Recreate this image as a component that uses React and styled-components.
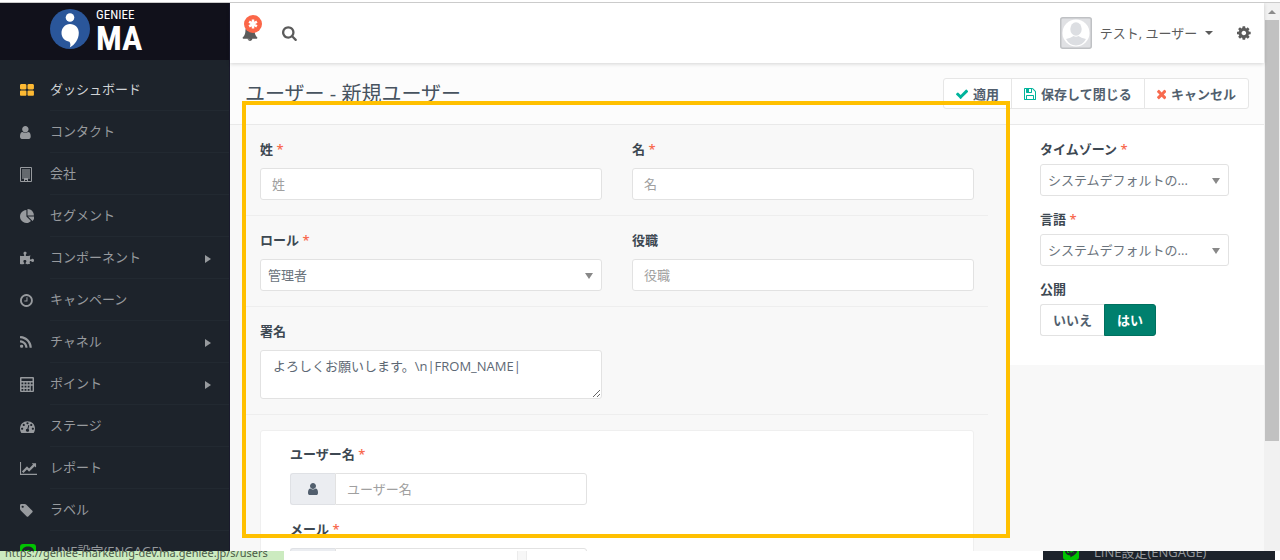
import { useState } from 'react';
import styled, { createGlobalStyle } from 'styled-components';
import { FaPuzzlePiece } from 'react-icons/fa';

// glyph outlines: x and w are the left edge and width in the 1792 high em
const icons = {
  dashboard: { x: 64, w: 1664, d: 'M832 1024v384q0 52-38 90t-90 38h-512q-52 0-90-38t-38-90v-384q0-52 38-90t90-38h512q52 0 90 38t38 90zm0-768v384q0 52-38 90t-90 38h-512q-52 0-90-38t-38-90v-384q0-52 38-90t90-38h512q52 0 90 38t38 90zm896 768v384q0 52-38 90t-90 38h-512q-52 0-90-38t-38-90v-384q0-52 38-90t90-38h512q52 0 90 38t38 90zm0-768v384q0 52-38 90t-90 38h-512q-52 0-90-38t-38-90v-384q0-52 38-90t90-38h512q52 0 90 38t38 90z' },
  user: { x: 256, w: 1280, d: 'M1536 1399q0 109-62.5 187t-150.5 78h-854q-88 0-150.5-78t-62.5-187q0-85 8.5-160.5t31.5-152 58.5-131 94-89 134.5-34.5q131 128 313 128t313-128q76 0 134.5 34.5t94 89 58.5 131 31.5 152 8.5 160.5zm-256-887q0 159-112.5 271.5t-271.5 112.5-271.5-112.5-112.5-271.5 112.5-271.5 271.5-112.5 271.5 112.5 112.5 271.5z' },
  pie: { x: 0, w: 1728, d: 'M768 890l546 546q-106 108-247.5 168t-298.5 60q-209 0-385.5-103t-279.5-279.5-103-385.5 103-385.5 279.5-279.5 385.5-103v762zm187 6h773q0 157-60 298.5t-168 247.5zm709-128h-768v-768q209 0 385.5 103t279.5 279.5 103 385.5z' },
  clock: { x: 128, w: 1536, d: 'M1024 544v448q0 14-9 23t-23 9h-320q-14 0-23-9t-9-23v-64q0-14 9-23t23-9h224v-352q0-14 9-23t23-9h64q14 0 23 9t9 23zm416 352q0-148-73-273t-198-198-273-73-273 73-198 198-73 273 73 273 198 198 273 73 273-73 198-198 73-273zm224 0q0 209-103 385.5t-279.5 279.5-385.5 103-385.5-103-279.5-279.5-103-385.5 103-385.5 279.5-279.5 385.5-103 385.5 103 279.5 279.5 103 385.5z' },
  rss: { x: 192, w: 1408, d: 'M576 1344q0 80-56 136t-136 56-136-56-56-136 56-136 136-56 136 56 56 136zm512 123q2 28-17 48-18 21-47 21h-135q-25 0-43-16.5t-20-41.5q-22-229-184.5-391.5t-391.5-184.5q-25-2-41.5-20t-16.5-43v-135q0-29 21-47 17-17 43-17h5q160 13 306 80.5t259 181.5q114 113 181.5 259t80.5 306zm512 2q2 27-18 47-18 20-46 20h-143q-26 0-44.5-17.5t-19.5-42.5q-12-215-101-408.5t-231.5-336-336-231.5-408.5-102q-25-1-42.5-19.5t-17.5-43.5v-143q0-28 20-46 18-18 44-18h3q262 13 501.5 120t425.5 294q187 186 294 425.5t120 501.5z' },
  gauge: { x: 0, w: 1792, d: 'M384 1152q0-53-37.5-90.5t-90.5-37.5-90.5 37.5-37.5 90.5 37.5 90.5 90.5 37.5 90.5-37.5 37.5-90.5zm192-448q0-53-37.5-90.5t-90.5-37.5-90.5 37.5-37.5 90.5 37.5 90.5 90.5 37.5 90.5-37.5 37.5-90.5zm428 481l101-382q6-26-7.5-48.5t-38.5-29.5-48 6.5-30 39.5l-101 382q-60 5-107 43.5t-63 98.5q-20 77 20 146t117 89 146-20 89-117q16-60-6-117t-72-91zm660-33q0-53-37.5-90.5t-90.5-37.5-90.5 37.5-37.5 90.5 37.5 90.5 90.5 37.5 90.5-37.5 37.5-90.5zm-640-640q0-53-37.5-90.5t-90.5-37.5-90.5 37.5-37.5 90.5 37.5 90.5 90.5 37.5 90.5-37.5 37.5-90.5zm448 192q0-53-37.5-90.5t-90.5-37.5-90.5 37.5-37.5 90.5 37.5 90.5 90.5 37.5 90.5-37.5 37.5-90.5zm320 448q0 261-141 483-19 29-54 29h-1402q-35 0-54-29-141-221-141-483 0-182 71-348t191-286 286-191 348-71 348 71 286 191 191 286 71 348z' },
  chart: { x: 0, w: 2048, d: 'M2048 1536v128h-2048v-1536h128v1408h1920zm-128-1248v435q0 21-19.5 29.5t-35.5-7.5l-121-121-633 633q-10 10-23 10t-23-10l-233-233-416 416-192-192 585-585q10-10 23-10t23 10l233 233 464-464-121-121q-16-16-7.5-35.5t29.5-19.5h435q14 0 23 9t9 23z' },
  tag: { x: 128, w: 1536, d: 'M576 448q0-53-37.5-90.5t-90.5-37.5-90.5 37.5-37.5 90.5 37.5 90.5 90.5 37.5 90.5-37.5 37.5-90.5zm1067 576q0 53-37 90l-491 492q-39 37-91 37-53 0-90-37l-715-716q-38-37-64.5-101t-26.5-117v-416q0-52 38-90t90-38h416q53 0 117 26.5t102 64.5l715 714q37 39 37 91z' },
  bell: { x: 0, w: 1792, d: 'M912 1696q0-16-16-16-59 0-101.5-42.5t-42.5-101.5q0-16-16-16t-16 16q0 73 51.5 124.5t124.5 51.5q16 0 16-16zm816-288q0 52-38 90t-90 38h-448q0 106-75 181t-181 75-181-75-75-181h-448q-52 0-90-38t-38-90q50-42 91-88t85-119.5 74.5-158.5 50-206 19.5-260q0-152 117-282.5t307-158.5q-8-19-8-39 0-40 28-68t68-28 68 28 28 68q0 20-8 39 190 28 307 158.5t117 282.5q0 139 19.5 260t50 206 74.5 158.5 85 119.5 91 88z' },
  search: { x: 64, w: 1664, d: 'M1216 832q0-185-131.5-316.5t-316.5-131.5-316.5 131.5-131.5 316.5 131.5 316.5 316.5 131.5 316.5-131.5 131.5-316.5zm512 832q0 52-38 90t-90 38q-54 0-90-38l-343-342q-179 124-399 124-143 0-273.5-55.5t-225-150-150-225-55.5-273.5 55.5-273.5 150-225 225-150 273.5-55.5 273.5 55.5 225 150 150 225 55.5 273.5q0 220-124 399l343 343q37 37 37 90z' },
  cog: { x: 128, w: 1536, d: 'M1152 896q0-106-75-181t-181-75-181 75-75 181 75 181 181 75 181-75 75-181zm512-109v222q0 12-8 23t-20 13l-185 28q-19 54-39 91 35 50 107 138 10 12 10 25t-9 23q-27 37-99 108t-94 71q-12 0-26-9l-138-108q-44 23-91 38-16 136-29 186-7 28-36 28h-222q-14 0-24.5-8.5t-11.5-21.5l-28-184q-49-16-90-37l-141 107q-10 9-25 9-14 0-25-11-126-114-165-168-7-10-7-23 0-12 8-23 15-21 51-66.5t54-70.5q-27-50-41-99l-183-27q-13-2-21-12.5t-8-23.5v-222q0-12 8-23t19-13l186-28q14-46 39-92-40-57-107-138-10-12-10-24 0-10 9-23 26-36 98.5-107.5t94.5-71.5q13 0 26 10l138 107q44-23 91-38 16-136 29-186 7-28 36-28h222q14 0 24.5 8.5t11.5 21.5l28 184q49 16 90 37l142-107q9-9 24-9 13 0 25 10 129 119 165 170 7 8 7 22 0 12-8 23-15 21-51 66.5t-54 70.5q26 50 41 98l183 28q13 2 21 12.5t8 23.5z' },
  check: { x: 121, w: 1550, d: 'M1671 566q0 40-28 68l-724 724-136 136q-28 28-68 28t-68-28l-136-136-362-362q-28-28-28-68t28-68l136-136q28-28 68-28t68 28l294 295 656-657q28-28 68-28t68 28l136 136q28 28 28 68z' },
  floppy: { x: 128, w: 1536, d: 'M512 1536h768v-384h-768v384zm896 0h128v-896q0-14-10-38.5t-20-34.5l-281-281q-10-10-34-20t-39-10v416q0 40-28 68t-68 28h-576q-40 0-68-28t-28-68v-416h-128v1280h128v-416q0-40 28-68t68-28h832q40 0 68 28t28 68v416zm-384-928v-320q0-13-9.5-22.5t-22.5-9.5h-192q-13 0-22.5 9.5t-9.5 22.5v320q0 13 9.5 22.5t22.5 9.5h192q13 0 22.5-9.5t9.5-22.5zm640 32v928q0 40-28 68t-68 28h-1344q-40 0-68-28t-28-68v-1344q0-40 28-68t68-28h928q40 0 88 20t76 48l280 280q28 28 48 76t20 88z' },
  times: { x: 302, w: 1188, d: 'M1490 1322q0 40-28 68l-136 136q-28 28-68 28t-68-28l-294-294-294 294q-28 28-68 28t-68-28l-136-136q-28-28-28-68t28-68l294-294-294-294q-28-28-28-68t28-68l136-136q28-28 68-28t68 28l294 294 294-294q28-28 68-28t68 28l136 136q28 28 28 68t-28 68l-294 294 294 294q28 28 28 68z' },
};

const Icon = ({ name, size = 15 }) => {
  const { x, w, d } = icons[name];
  return (
    <svg width={(size * w) / 1792} height={size} viewBox={`${x} 0 ${w} 1792`} fill="currentColor" aria-hidden="true">
      <path d={d} />
    </svg>
  );
};

const BuildingIcon = () => (
  <svg width="12" height="15" viewBox="0 0 12 15" aria-hidden="true">
    <path fill="currentColor" opacity=".45" d="M2 2h8v10H2z" />
    <path fill="none" stroke="currentColor" d="M.5.5h11v14H.5z" />
    <path stroke="currentColor" strokeDasharray="1 1" d="M2.500 3h7M2.500 5h7M2.500 7h7M2.500 9h7M2.500 11h7" />
    <path fill="currentColor" d="M4 11h4v4H7v-2H5v2H4z" />
  </svg>
);

const CalculatorIcon = () => (
  <svg width="14" height="15" viewBox="0 0 14 15" fill="currentColor" fillRule="evenodd" aria-hidden="true">
    <path d="M1 0h12q1 0 1 1v13q0 1-1 1H1q-1 0-1-1V1q0-1 1-1zM1.500 1.500v2.500h11V1.500zM1.500 5.500v1.800h1.800V5.500zM4.600 5.500v1.800h1.800V5.500zM7.700 5.500v1.800h1.800V5.500zM10.800 5.500v1.800h1.800V5.500zM1.500 8.700v1.800h1.800V8.700zM4.600 8.700v1.800h1.800V8.700zM7.700 8.700v1.800h1.800V8.700zM10.800 8.700v5h1.800v-5zM1.500 11.900v1.800h1.800v-1.800zM4.600 11.900v1.800h1.800v-1.800zM7.700 11.900v1.800h1.800v-1.800z" />
  </svg>
);

const LineIcon = () => (
  <svg width="16" height="16" viewBox="0 0 16 16" aria-hidden="true">
    <rect width="16" height="16" rx="3" fill="#00c300" />
    <path fill="#1d232b" d="M8 2.500c-3.300 0-6 2-6 4.600 0 2.300 2 4.100 5 4.500.6.200.5.700.4 1.900 2.900-1.600 6.600-3.700 6.600-6.400C14 4.500 11.300 2.500 8 2.500z" />
    <path fill="none" stroke="#00c300" d="M4.500 6v2.500H6M7.200 6v2.500M8.500 8.500V6l2 2.500" />
  </svg>
);

const menu = [
  { label: 'ダッシュボード', icon: <Icon name="dashboard" />, active: true },
  { label: 'コンタクト', icon: <Icon name="user" /> },
  { label: '会社', icon: <BuildingIcon /> },
  { label: 'セグメント', icon: <Icon name="pie" /> },
  { label: 'コンポーネント', icon: <FaPuzzlePiece size={14} />, sub: true },
  { label: 'キャンペーン', icon: <Icon name="clock" /> },
  { label: 'チャネル', icon: <Icon name="rss" />, sub: true },
  { label: 'ポイント', icon: <CalculatorIcon />, sub: true },
  { label: 'ステージ', icon: <Icon name="gauge" /> },
  { label: 'レポート', icon: <Icon name="chart" /> },
  { label: 'ラベル', icon: <Icon name="tag" /> },
  { label: 'LINE設定(ENGAGE)', icon: <LineIcon /> },
];

const Field = ({ id, label, required, children }) => (
  <FieldBox>
    <Label htmlFor={id}>
      {label}
      {required && <Star> *</Star>}
    </Label>
    {children}
  </FieldBox>
);

const App = () => {
  const [published, setPublished] = useState(true);
  const [signature, setSignature] = useState('よろしくお願いします。\\n|FROM_NAME|');

  return (
    <>
      <GlobalStyle />
      <Page>
        <Workspace>
          <Sidebar>
            <Brand href="#">
              <svg width="40" height="40" viewBox="0 0 40 40" aria-hidden="true">
                <circle cx="20" cy="20" r="20" fill="#2a569a" />
                <circle cx="20" cy="8.500" r="4.300" fill="#fff" />
                <path fill="#fff" d="M20 15c5.200 0 8.800 3.800 8.800 8.700 0 6.500-3.800 11.800-9 14.800.9-2.200.8-4.300-.4-5.800-4.300-.5-7.900-4-7.900-8.700C11.500 19 15 15 20 15z" />
              </svg>
              <BrandText>
                <BrandTop>GENIEE</BrandTop>
                <BrandMain>MA</BrandMain>
              </BrandText>
            </Brand>
            <Menu>
              {menu.map((item) => (
                <MenuItem key={item.label} href="#" $active={item.active}>
                  <MenuIcon $active={item.active}>{item.icon}</MenuIcon>
                  <MenuText>
                    {item.label}
                    {item.sub && (
                      <svg width="6" height="8" viewBox="0 0 6 8" fill="currentColor" aria-hidden="true">
                        <path d="M0 0l6 4-6 4z" />
                      </svg>
                    )}
                  </MenuText>
                </MenuItem>
              ))}
            </Menu>
          </Sidebar>

          <Main>
            <Topbar>
              <BellButton aria-label="通知">
                <Icon name="bell" size={16} />
                <Badge>
                  <svg width="10" height="10" viewBox="0 0 10 10" stroke="#fff" strokeWidth="2.500" aria-hidden="true">
                    <path d="M5 .5v9M1.100 2.700l7.800 4.600M8.900 2.700L1.100 7.300" />
                  </svg>
                </Badge>
              </BellButton>
              <IconButton aria-label="検索">
                <Icon name="search" size={16} />
              </IconButton>
              <UserButton>
                <svg width="32" height="32" viewBox="0 0 32 32" aria-hidden="true">
                  <rect x=".75" y=".75" width="30.500" height="30.500" rx="2" fill="#e0e1e4" stroke="#bfc1c4" strokeWidth="1.500" />
                  <circle cx="16" cy="16" r="13.500" fill="#fff" />
                  <ellipse cx="16" cy="12" rx="5.700" ry="6.800" fill="#dcdee2" />
                  <path d="M6 22q5-1 7.500-3 2.500 1.500 5 0 2.500 2 7.500 3-3.500 6.500-10 6.500T6 22z" fill="#dcdee2" />
                </svg>
                <span>テスト, ユーザー</span>
                <svg width="8" height="4" viewBox="0 0 8 4" fill="currentColor" aria-hidden="true">
                  <path d="M0 0h8L4 4z" />
                </svg>
              </UserButton>
              <IconButton aria-label="設定">
                <Icon name="cog" size={16} />
              </IconButton>
            </Topbar>

            <TitleBar>
              <Title>ユーザー - 新規ユーザー</Title>
              <ButtonGroup>
                <ToolButton $color="#00b49c"><Icon name="check" size={14} />適用</ToolButton>
                <ToolButton $color="#00b49c"><Icon name="floppy" size={14} />保存して閉じる</ToolButton>
                <ToolButton $color="#f86b4f"><Icon name="times" size={14} />キャンセル</ToolButton>
              </ButtonGroup>
            </TitleBar>

            <Content>
              <Form>
                <Row>
                  <Field id="lastName" label="姓" required>
                    <Input id="lastName" placeholder="姓" />
                  </Field>
                  <Field id="firstName" label="名" required>
                    <Input id="firstName" placeholder="名" />
                  </Field>
                </Row>
                <Row>
                  <Field id="role" label="ロール" required>
                    <SelectBox>
                      <Select id="role"><option>管理者</option></Select>
                    </SelectBox>
                  </Field>
                  <Field id="position" label="役職">
                    <Input id="position" placeholder="役職" />
                  </Field>
                </Row>
                <Row>
                  <Field id="signature" label="署名">
                    <Textarea id="signature" value={signature} onChange={(e) => setSignature(e.target.value)} />
                  </Field>
                </Row>
                <Panel>
                  <Field id="username" label="ユーザー名" required>
                    <InputGroup>
                      <Addon><Icon name="user" size={14} /></Addon>
                      <Input id="username" placeholder="ユーザー名" />
                    </InputGroup>
                  </Field>
                  <Field id="email" label="メール" required>
                    <InputGroup>
                      <Addon />
                      <Input id="email" type="email" />
                    </InputGroup>
                  </Field>
                </Panel>
              </Form>

              <Settings>
                <SideField>
                  <Label htmlFor="timezone">タイムゾーン<Star> *</Star></Label>
                  <SelectBox>
                    <Select id="timezone"><option>システムデフォルトの...</option></Select>
                  </SelectBox>
                </SideField>
                <SideField>
                  <Label htmlFor="locale">言語<Star> *</Star></Label>
                  <SelectBox>
                    <Select id="locale"><option>システムデフォルトの...</option></Select>
                  </SelectBox>
                </SideField>
                <SideField as="fieldset">
                  <Label as="legend">公開</Label>
                  <Toggle>
                    <ToggleOption $on={!published}>
                      <input type="radio" name="published" checked={!published} onChange={() => setPublished(false)} />
                      いいえ
                    </ToggleOption>
                    <ToggleOption $on={published}>
                      <input type="radio" name="published" checked={published} onChange={() => setPublished(true)} />
                      はい
                    </ToggleOption>
                  </Toggle>
                </SideField>
              </Settings>
            </Content>
          </Main>

          <Scrollbar>
            <svg width="8" height="4" viewBox="0 0 8 4" fill="#8b8b8b" aria-hidden="true">
              <path d="M4 0l4 4H0z" />
            </svg>
            <Thumb />
          </Scrollbar>
        </Workspace>

        <Footer>
          <StatusUrl>https://geniee-marketing-dev.ma.geniee.jp/s/users</StatusUrl>
          <FooterSlot />
          <FooterMenu href="#">
            <LineIcon />
            LINE設定(ENGAGE)
          </FooterMenu>
        </Footer>
        <Highlight />
      </Page>
    </>
  );
};
export default App;

const GlobalStyle = createGlobalStyle`
  * {
    box-sizing: border-box;
  }
  body {
    margin: 0;
    background: #fff;
    color: #47535f;
    font-family: "Open Sans", "Noto Sans CJK JP", sans-serif;
    font-size: 13px;
    line-height: 20px;
  }
  button, input, select, textarea {
    font: inherit;
    color: inherit;
  }
  a {
    color: inherit;
    text-decoration: none;
  }
  svg {
    flex: none;
  }
`
const Page = styled.div`
  position: relative;
  display: flex;
  flex-direction: column;
  height: 100vh;
  padding-top: 2px;
  overflow: hidden;
`
const Workspace = styled.div`
  display: flex;
  flex: 1;
  min-height: 0;
  border-top: 1px solid #cbcbcb;
  overflow: hidden;
`
const Sidebar = styled.aside`
  width: 230px;
  flex: none;
  background: #1d232b;
  border-right: 1px solid #1a1a2c;
  overflow: hidden;
`
const Brand = styled.a`
  display: flex;
  gap: 6px;
  height: 57px;
  padding: 6px 0 0 50px;
  background: #11111b;
  color: #fff;
  font-family: "Roboto Condensed", "Liberation Sans", sans-serif;
`
const BrandText = styled.span`
  display: flex;
  flex-direction: column;
`
const BrandTop = styled.span`
  font-size: 13px;
  line-height: 12px;
`
const BrandMain = styled.span`
  font-size: 34px;
  font-weight: 700;
  line-height: 34px;
`
const Menu = styled.nav`
  padding-top: 9px;
`
const MenuItem = styled.a`
  display: flex;
  height: 42px;
  padding-left: 20px;
  color: ${(props) => (props.$active ? '#d0d3d6' : '#979a9e')};
`
const MenuIcon = styled.span`
  display: flex;
  align-items: center;
  width: 30px;
  color: ${(props) => (props.$active ? '#fdb933' : '#979a9e')};
`
const MenuText = styled.span`
  display: flex;
  flex: 1;
  align-items: center;
  justify-content: space-between;
  padding: 0 18px 2px 0;
  border-bottom: 1px solid #222931;
  svg {
    margin-top: 4px;
  }
`
const Main = styled.main`
  display: flex;
  flex: 1;
  flex-direction: column;
  min-width: 0;
  background: #f8f8f8;
`
const Topbar = styled.header`
  position: relative;
  display: flex;
  flex: none;
  align-items: center;
  height: 60px;
  padding: 0 13px 0 12px;
  background: #fff;
  box-shadow: 0 1px 4px rgba(0, 0, 0, 0.16);
  color: #5b5b5b;
`
const IconButton = styled.button`
  display: flex;
  padding: 0;
  border: 0;
  background: none;
  cursor: pointer;
`
const BellButton = styled(IconButton)`
  position: relative;
  margin-right: 24px;
`
const Badge = styled.span`
  position: absolute;
  top: -10px;
  left: 2px;
  display: flex;
  align-items: center;
  justify-content: center;
  width: 18px;
  height: 18px;
  border-radius: 50%;
  background: #fb6648;
`
const UserButton = styled(IconButton)`
  align-items: center;
  gap: 8px;
  margin-left: auto;
  margin-right: 24px;
`
const TitleBar = styled.div`
  display: flex;
  flex: none;
  align-items: center;
  justify-content: space-between;
  height: 62px;
  padding: 0 15px;
  background: #fcfcfc;
  border-bottom: 1px solid #e9e9e9;
`
const Title = styled.h1`
  margin: 0;
  font-size: 20px;
  font-weight: 400;
  line-height: 28px;
`
const ButtonGroup = styled.div`
  display: flex;
`
const ToolButton = styled.button`
  display: flex;
  align-items: center;
  gap: 5px;
  height: 31px;
  padding: 0 12px;
  border: 1px solid #e6e6e6;
  background: #fff;
  color: #525f6e;
  font-weight: 600;
  cursor: pointer;
  & + & {
    margin-left: -1px;
  }
  &:first-child {
    border-radius: 3px 0 0 3px;
  }
  &:last-child {
    border-radius: 0 3px 3px 0;
  }
  svg {
    color: ${(props) => props.$color};
  }
`
const Content = styled.div`
  display: flex;
  flex: 1;
  align-items: flex-start;
  min-height: 0;
`
const Form = styled.form`
  flex: 1;
  min-width: 0;
  padding: 0 22px 0 16px;
`
const Row = styled.div`
  display: grid;
  grid-template-columns: 1fr 1fr;
  gap: 30px;
  padding: 14px 14px 15px;
  border-bottom: 1px solid #eeeeee;
`
const FieldBox = styled.div`
  display: flex;
  flex-direction: column;
  gap: 9px;
`
const Label = styled.label`
  padding: 0;
  color: #3d4852;
  font-weight: 600;
  line-height: 20px;
`
const Star = styled.span`
  color: #f86b4f;
`
const Input = styled.input`
  width: 100%;
  height: 32px;
  padding: 0 11px;
  border: 1px solid #e2e2e2;
  border-radius: 3px;
  background: #fff;
  &::placeholder {
    color: #a0a0a0;
  }
`
const SelectBox = styled.div`
  position: relative;
  &::after {
    content: '';
    position: absolute;
    top: 14px;
    right: 9px;
    border: 4px solid transparent;
    border-top: 6px solid #888;
    border-bottom: 0;
    pointer-events: none;
  }
`
const Select = styled.select`
  display: block;
  width: 100%;
  height: 32px;
  padding: 0 24px 0 7px;
  border: 1px solid #e2e2e2;
  border-radius: 3px;
  background: #fff;
  color: #6a737c;
  appearance: none;
`
const Textarea = styled.textarea`
  display: block;
  height: 49px;
  padding: 6px 12px;
  border: 1px solid #e2e2e2;
  border-radius: 3px;
  background: #fff;
  color: #5d6874;
  line-height: 18px;
  resize: vertical;
`
const Panel = styled.section`
  display: grid;
  grid-template-columns: 1fr;
  gap: 14px;
  margin: 15px 14px 0;
  padding: 13px 29px;
  border: 1px solid #efefef;
  border-radius: 3px;
  background: #fff;
`
const InputGroup = styled.div`
  display: flex;
  width: calc(50% - 30px);
  input {
    flex: 1;
    min-width: 0;
    border-radius: 0 3px 3px 0;
  }
`
const Addon = styled.span`
  display: flex;
  align-items: center;
  justify-content: center;
  width: 45px;
  border: 1px solid #dfe1e5;
  border-right: 0;
  border-radius: 3px 0 0 3px;
  background: #ebedf1;
  color: #525f6e;
`
const Settings = styled.aside`
  display: flex;
  flex-direction: column;
  gap: 13px;
  width: 254px;
  padding: 14px 35px 29px 30px;
  background: #fff;
`
const SideField = styled.div`
  display: flex;
  flex-direction: column;
  gap: 5px;
  min-width: 0;
  margin: 0;
  padding: 0;
  border: 0;
  legend {
    margin-bottom: 5px;
  }
`
const Toggle = styled.div`
  display: flex;
`
const ToggleOption = styled.label`
  display: flex;
  align-items: center;
  height: 32px;
  padding: 0 12px;
  border: 1px solid ${(props) => (props.$on ? '#00705f' : '#e2e2e2')};
  border-radius: 3px;
  background: ${(props) => (props.$on ? '#00806e' : '#fff')};
  color: ${(props) => (props.$on ? '#fff' : '#525f6e')};
  font-weight: 600;
  cursor: pointer;
  &:first-child {
    border-right: 0;
    border-radius: 3px 0 0 3px;
  }
  &:last-child {
    border-radius: 0 3px 3px 0;
  }
  input {
    position: absolute;
    opacity: 0;
    pointer-events: none;
  }
`
const Scrollbar = styled.div`
  display: flex;
  flex: none;
  flex-direction: column;
  align-items: center;
  gap: 6px;
  width: 16px;
  padding: 7px 1px 110px;
  background: #f1f1f1;
`
const Thumb = styled.div`
  flex: 1;
  width: 100%;
  background: #c1c1c1;
`
const Footer = styled.footer`
  display: flex;
  flex: none;
  align-items: flex-end;
  height: 9px;
  padding-right: 5px;
  background: #fff;
  overflow: hidden;
`
const StatusUrl = styled.span`
  width: 284px;
  padding: 0 5px;
  background: #ccebc0;
  color: #4b5a48;
  font-family: "Noto Sans", sans-serif;
  font-size: 11px;
  line-height: 15px;
  white-space: nowrap;
`
const FooterSlot = styled.span`
  width: 10px;
  height: 9px;
  margin-left: 233px;
  background: #f7f7f7;
  border: solid #ececec;
  border-width: 0 1px;
`
const FooterMenu = styled.a`
  display: flex;
  align-items: center;
  gap: 15px;
  width: 232px;
  height: 16px;
  margin-left: auto;
  padding-left: 20px;
  background: #1d232b;
  color: #979a9e;
  line-height: 16px;
`
const Highlight = styled.div`
  position: absolute;
  top: 101px;
  right: 270px;
  bottom: 22px;
  left: 242px;
  border: 4px solid #ffc000;
  pointer-events: none;
`
